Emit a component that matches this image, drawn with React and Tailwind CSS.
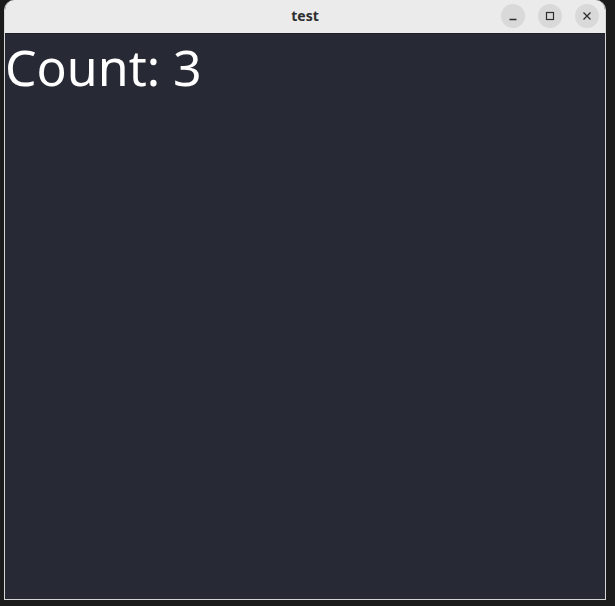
import React, { useState } from 'react';

const WinButton = ({ children }) => (
    <div className="w-6 h-6 rounded-full bg-[#d9d9d9] flex items-center justify-center text-[#2e2e2e]">
        {children}
    </div>
);

const App = () => {
    const [count] = useState(3);

    return (
        <div className="w-[615px] h-[606px] bg-[#1b1b1b] flex pl-[4px] pr-[9px] pb-[6px] overflow-hidden">
            {/* Window frame */}
            <div className="flex-1 flex flex-col rounded-t-[10px] overflow-hidden border-x border-b border-[#d6d6d6]">
                {/* Title bar */}
                <div className="h-[33px] shrink-0 bg-[#ebebeb] relative flex items-center justify-center">
                    <span className="text-[14px] leading-none font-bold text-[#2e2e2e] font-['Noto_Sans',sans-serif] -mt-[1px]">test</span>
                    <div className="absolute right-[6px] top-[4px] flex gap-[13px]">
                        <WinButton>
                            <svg width="10" height="10" viewBox="0 0 10 10"><path d="M1.5 8.5h7" stroke="currentColor" strokeWidth="1.3" /></svg>
                        </WinButton>
                        <WinButton>
                            <svg width="10" height="10" viewBox="0 0 10 10"><rect x="1.5" y="1.5" width="7" height="7" fill="none" stroke="currentColor" strokeWidth="1.2" /></svg>
                        </WinButton>
                        <WinButton>
                            <svg width="10" height="10" viewBox="0 0 10 10"><path d="M1.5 1.5l7 7M8.5 1.5l-7 7" stroke="currentColor" strokeWidth="1.3" /></svg>
                        </WinButton>
                    </div>
                </div>

                {/* Content */}
                <div className="flex-1 bg-[#272935] border-t border-[#1f2029]">
                    <div className="text-white text-[50px] leading-[66px] font-['Noto_Sans',sans-serif]">
                        Count: {count}
                    </div>
                </div>
            </div>
        </div>
    );
};

export default App;
